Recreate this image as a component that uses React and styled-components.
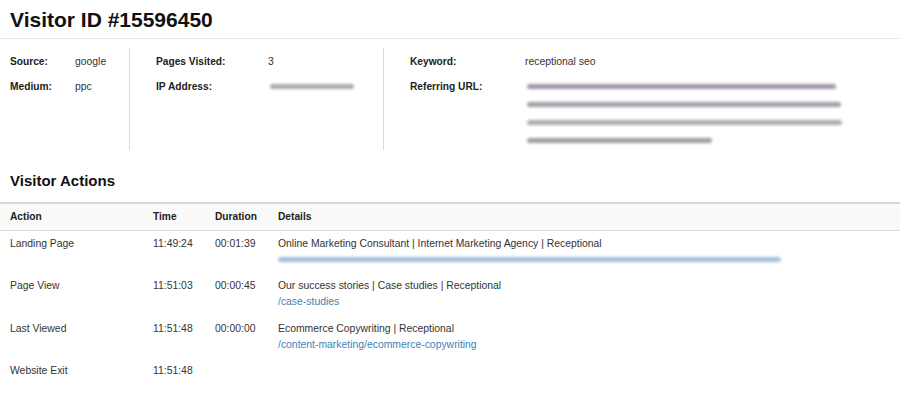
import styled, { createGlobalStyle } from 'styled-components'

const GlobalStyle = createGlobalStyle`
    body {
        margin: 0;
        background: #fff;
        font-family: "Liberation Sans", Arial, sans-serif;
        font-size: 10.4px;
        color: #333;
    }
`

const info = [
    {
        width: 130,
        pad: 10,
        labelWidth: 65,
        rows: [
            { label: 'Source:', value: 'google' },
            { label: 'Medium:', value: 'ppc' },
        ],
    },
    {
        width: 254,
        pad: 26,
        labelWidth: 112,
        rows: [
            { label: 'Pages Visited:', value: '3' },
            { label: 'IP Address:', smudges: [{ w: 84, c: '#9a9a9a' }] },
        ],
    },
    {
        pad: 26,
        labelWidth: 115,
        rows: [
            { label: 'Keyword:', value: 'receptional seo' },
            {
                label: 'Referring URL:',
                smudges: [
                    { w: 309, c: '#8d8294' },
                    { w: 314, c: '#948c98' },
                    { w: 315, c: '#a09aa3' },
                    { w: 185, c: '#8f8a93' },
                ],
            },
        ],
    },
]

const actions = [
    {
        action: 'Landing Page',
        time: '11:49:24',
        duration: '00:01:39',
        title: 'Online Marketing Consultant | Internet Marketing Agency | Receptional',
        blurLink: 503,
    },
    {
        action: 'Page View',
        time: '11:51:03',
        duration: '00:00:45',
        title: 'Our success stories | Case studies | Receptional',
        link: '/case-studies',
    },
    {
        action: 'Last Viewed',
        time: '11:51:48',
        duration: '00:00:00',
        title: 'Ecommerce Copywriting | Receptional',
        link: '/content-marketing/ecommerce-copywriting',
    },
    {
        action: 'Website Exit',
        time: '11:51:48',
    },
]

export default function App() {
    return (
        <Page>
            <GlobalStyle />
            <Header>
                <Title>Visitor ID #15596450</Title>
            </Header>
            <InfoBox>
                {info.map((col, i) => (
                    <InfoColumn key={i} $width={col.width} $pad={col.pad} $last={i === info.length - 1}>
                        {col.rows.map((row, j) => (
                            <InfoRow key={j}>
                                <Label $width={col.labelWidth}>{row.label}</Label>
                                {row.value && <Value>{row.value}</Value>}
                                {row.smudges && (
                                    <SmudgeStack>
                                        {row.smudges.map((s, k) => (
                                            <Smudge key={k} $color={s.c} style={{ width: s.w }} />
                                        ))}
                                    </SmudgeStack>
                                )}
                            </InfoRow>
                        ))}
                    </InfoColumn>
                ))}
            </InfoBox>
            <SectionTitle>Visitor Actions</SectionTitle>
            <Table>
                <colgroup>
                    <col style={{ width: 143 }} />
                    <col style={{ width: 62 }} />
                    <col style={{ width: 63 }} />
                    <col />
                </colgroup>
                <thead>
                    <tr>
                        <Th>Action</Th>
                        <Th>Time</Th>
                        <Th>Duration</Th>
                        <Th>Details</Th>
                    </tr>
                </thead>
                <tbody>
                    {actions.map((item, index) => (
                        <tr key={index}>
                            <Td>{item.action}</Td>
                            <Td>{item.time}</Td>
                            <Td>{item.duration}</Td>
                            <Td>
                                {item.title && <DetailLine>{item.title}</DetailLine>}
                                {item.link && <DetailLink href="#">{item.link}</DetailLink>}
                                {item.blurLink && (
                                    <DetailLine>
                                        <Smudge $color="#8fb3d6" style={{ width: item.blurLink }} />
                                    </DetailLine>
                                )}
                            </Td>
                        </tr>
                    ))}
                </tbody>
            </Table>
        </Page>
    )
}

const Page = styled.div`
    width: 900px;
    min-height: 394px;
    overflow: hidden;
`

const Header = styled.div`
    height: 38px;
    padding: 0 10px;
    display: flex;
    align-items: center;
    border-bottom: 1px solid #e6e6e6;
`

const Title = styled.h1`
    margin: 0;
    font-size: 21px;
    font-weight: bold;
    color: #111;
    line-height: 1;
    padding-top: 1px;
`

const InfoBox = styled.div`
    display: flex;
    margin-top: 9px;
    height: 102px;
`

const InfoColumn = styled.div`
    ${props => props.$width ? `width: ${props.$width}px;` : 'flex: 1;'}
    box-sizing: border-box;
    padding-top: 1px;
    padding-left: ${props => props.$pad}px;
    border-right: ${props => props.$last ? 'none' : '1px solid #d9d9d9'};
`

const InfoRow = styled.div`
    display: flex;
    align-items: flex-start;
    line-height: 25px;
`

const Label = styled.div`
    width: ${props => props.$width}px;
    flex-shrink: 0;
    font-weight: bold;
    font-size: 10.2px;
    color: #222;
`

const Value = styled.div`
    color: #333;
`

const SmudgeStack = styled.div`
    display: flex;
    flex-direction: column;
    gap: 13px;
    padding-top: 10px;
    padding-left: 2px;
`

const Smudge = styled.span`
    display: block;
    height: 5px;
    border-radius: 3px;
    background: ${props => props.$color};
    filter: blur(1.8px);
    opacity: 0.85;
`

const SectionTitle = styled.h2`
    margin: 21px 0 0;
    padding: 0 10px;
    font-size: 15px;
    font-weight: bold;
    color: #111;
    line-height: 20px;
`

const Table = styled.table`
    width: 100%;
    margin-top: 11px;
    border-collapse: collapse;
    table-layout: fixed;
`

const Th = styled.th`
    box-sizing: border-box;
    height: 27px;
    padding: 0 10px;
    text-align: left;
    font-weight: bold;
    font-size: 10.2px;
    color: #222;
    background: #f9f9f9;
    border-top: 2px solid #d6d6d6;
    border-bottom: 1px solid #dcdcdc;
`

const Td = styled.td`
    padding: 5px 10px 5.5px;
    vertical-align: top;
    line-height: 16px;
    color: #333;
    white-space: nowrap;
`

const DetailLine = styled.div`
    height: 16px;
    display: flex;
    align-items: center;
`

const DetailLink = styled.a`
    display: block;
    color: #3f7fb8;
    text-decoration: none;
`
